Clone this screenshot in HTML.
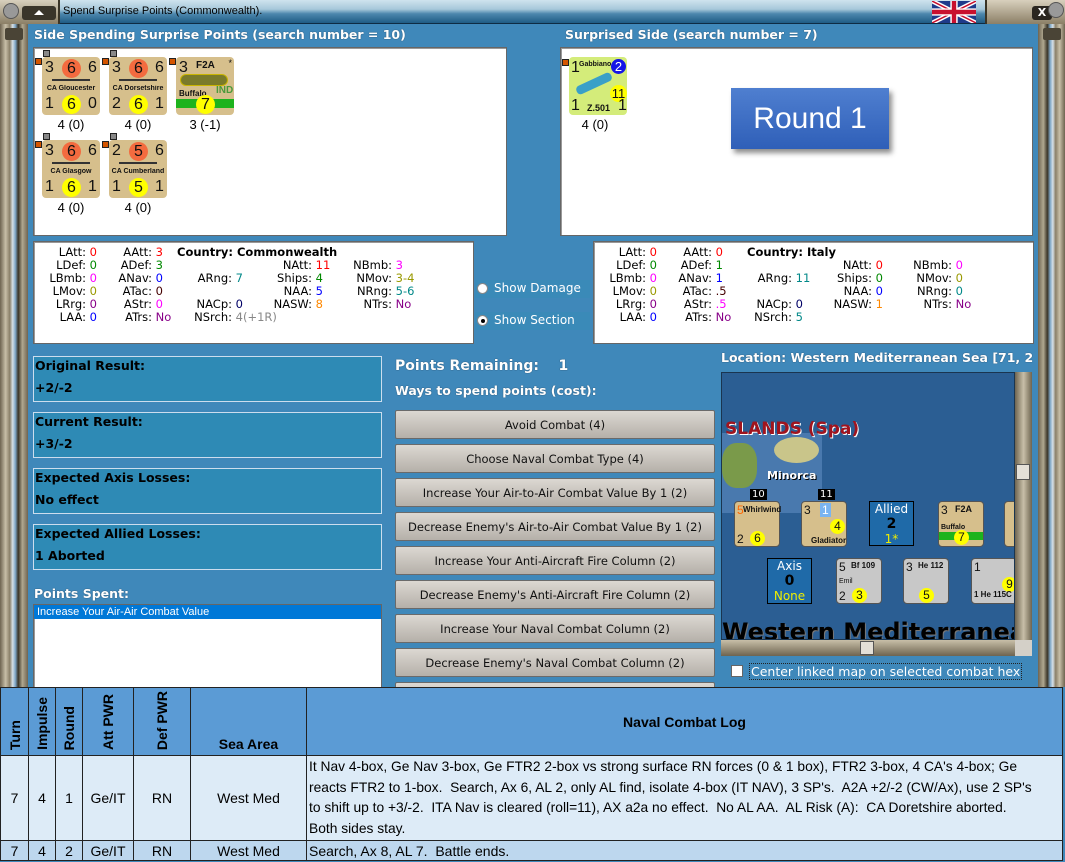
<!DOCTYPE html>
<html><head><meta charset="utf-8">
<style>
*{margin:0;padding:0;box-sizing:border-box}
body{width:1065px;height:862px;overflow:hidden;position:relative;background:#3f88ba;font-family:"DejaVu Sans",Verdana,sans-serif;font-size:11px}
.a{position:absolute}
.hdr{color:#fff;font-weight:bold;font-size:12.5px;text-shadow:0 0 1px #234}
.wb{background:#fff;border:1px solid #666;box-shadow:inset 1px 1px 0 #999}
.ctr{position:absolute;width:58px;height:58px;background:#d6bf8c;border-radius:4px;font-family:"Liberation Sans",Arial,sans-serif;color:#111}
.ctr .n{position:absolute;font-size:16px}
.ctr .c{position:absolute;width:19px;height:19px;border-radius:50%;text-align:center;font-size:16px;line-height:19px;left:20px}
.ctr .nm{position:absolute;width:100%;text-align:center;font-size:7px;font-weight:bold;top:28px;white-space:nowrap;overflow:hidden}
.ship{position:absolute;left:10px;top:20px;width:38px;height:4px;border-bottom:2px solid #333}
.dot{position:absolute;width:7px;height:7px;background:#d45500;border:1px solid #222}
.gdot{position:absolute;width:7px;height:7px;background:#888;border:1px solid #222}
.cap{position:absolute;font-family:"Liberation Sans",Arial,sans-serif;font-size:13px;color:#000;width:60px;text-align:center}
.st{position:absolute;line-height:13px;font-size:11.5px}
.st div{height:13px;white-space:nowrap}
.l{display:inline-block;text-align:right}
.res{position:absolute;left:33px;width:349px;height:46px;background:#2e8ab5;border:1px solid #cde;color:#000;font-weight:bold;font-size:12.5px;padding:1px 1px}
.res div{height:22px}
.btn{position:absolute;left:395px;width:320px;height:29px;background:linear-gradient(#dcd8d2,#b5b0a9);border:1px solid #6a6a6a;border-radius:2px;text-align:center;line-height:28px;font-size:11.5px;color:#111}
.mc{position:absolute;width:46px;height:46px;border-radius:4px;font-family:"Liberation Sans",Arial,sans-serif;font-size:12px;color:#111;border:1px solid #555}
.mc .y{position:absolute;width:15px;height:15px;border-radius:50%;background:#ff0;text-align:center;line-height:15px;font-size:12px}
table{border-collapse:collapse;font-family:"Liberation Sans",Calibri,sans-serif;table-layout:fixed}
td,th{border:1.5px solid #222;text-align:center}
th{background:#5b9bd5;color:#000;font-weight:bold;font-size:14px;vertical-align:bottom}
.rot{writing-mode:vertical-rl;transform:rotate(180deg);display:inline-block;padding:2px 0}
</style></head><body>
<div class="a" style="left:0;top:0;width:1065px;height:24px;background:linear-gradient(#cfe3ee,#a7c8da 40%,#4d87ad 60%,#1f5c85);border-bottom:1px solid #0e2c44"></div>
<div class="a" style="left:0;top:0;width:60px;height:24px;background:linear-gradient(#d8d0bd,#8b7f66);border-right:2px solid #3a3426"></div>
<div class="a" style="left:3px;top:3px;width:16px;height:16px;border-radius:50%;background:#999;border:1px solid #555"></div>
<div class="a" style="left:22px;top:6px;width:34px;height:14px;background:#3a352a;border-radius:3px"><div class="a" style="left:12px;top:4px;width:0;height:0;border-left:5px solid transparent;border-right:5px solid transparent;border-bottom:5px solid #fff"></div></div>
<div class="a" style="left:63px;top:5px;font-family:'Liberation Sans',Arial;font-size:11px;color:#000">Spend Surprise Points (Commonwealth).</div>
<svg class="a" style="left:932px;top:1px" width="44" height="22" viewBox="0 0 60 30"><rect width="60" height="30" fill="#1e3a8a"/><path d="M0 0L60 30M60 0L0 30" stroke="#fff" stroke-width="6"/><path d="M0 0L60 30M60 0L0 30" stroke="#c8102e" stroke-width="2"/><path d="M30 0V30M0 15H60" stroke="#fff" stroke-width="10"/><path d="M30 0V30M0 15H60" stroke="#c8102e" stroke-width="6"/></svg>
<div class="a" style="left:985px;top:0;width:80px;height:24px;background:linear-gradient(#d8d0bd,#8b7f66);border-left:2px solid #3a3426"></div>
<div class="a" style="left:1032px;top:6px;width:20px;height:14px;background:#2a2620;border-radius:3px;color:#fff;font-size:11px;text-align:center;line-height:14px;font-weight:bold">X</div>
<div class="a" style="left:1048px;top:2px;width:16px;height:16px;border-radius:50%;background:#999;border:1px solid #555"></div>
<div class="a" style="left:0;top:24px;width:28px;height:663px;background:linear-gradient(90deg,#6e6450,#c8bfa8 20%,#8a7f68 35%,#d6e0e6 45%,#7ea6c6 55%,#3a3426 65%,#b0a890 80%,#6e6450)"></div>
<div class="a" style="left:5px;top:28px;width:18px;height:12px;background:#4a4436;border-radius:2px"></div>
<div class="a" style="left:1038px;top:24px;width:27px;height:663px;background:linear-gradient(90deg,#6e6450,#b0a890 20%,#3a3426 35%,#7ea6c6 45%,#d6e0e6 55%,#8a7f68 65%,#c8bfa8 80%,#6e6450)"></div>
<div class="a" style="left:1043px;top:28px;width:18px;height:12px;background:#4a4436;border-radius:2px"></div>

<div class="a hdr" style="left:34px;top:27px">Side Spending Surprise Points (search number = 10)</div>
<div class="a hdr" style="left:565px;top:27px">Surprised Side (search number = 7)</div>

<div class="a wb" style="left:33px;top:47px;width:474px;height:189px"></div>
<div class="a wb" style="left:560px;top:47px;width:473px;height:189px"></div>

<div class="gdot" style="left:43px;top:50px"></div><div class="dot" style="left:35px;top:58px"></div>
<div class="ctr" style="left:42px;top:57px"><span class="n" style="left:3px;top:2px">3</span><span class="c" style="background:#f36b3f;top:2px">6</span><span class="n" style="left:46px;top:2px">6</span><div class="ship"></div><div class="nm">CA Gloucester</div><span class="n" style="left:3px;top:38px">1</span><span class="c" style="background:#ff0;top:38px">6</span><span class="n" style="left:46px;top:38px">0</span></div>
<div class="cap" style="left:41px;top:117px">4 (0)</div>

<div class="gdot" style="left:110px;top:50px"></div><div class="dot" style="left:102px;top:58px"></div>
<div class="ctr" style="left:109px;top:57px"><span class="n" style="left:3px;top:2px">3</span><span class="c" style="background:#f36b3f;top:2px">6</span><span class="n" style="left:46px;top:2px">6</span><div class="ship"></div><div class="nm">CA Dorsetshire</div><span class="n" style="left:3px;top:38px">2</span><span class="c" style="background:#ff0;top:38px">6</span><span class="n" style="left:46px;top:38px">1</span></div>
<div class="cap" style="left:108px;top:117px">4 (0)</div>

<div class="dot" style="left:169px;top:58px"></div>
<div class="ctr" style="left:176px;top:57px"><span class="n" style="left:3px;top:2px">3</span><span class="a" style="left:20px;top:3px;font-size:10px;font-weight:bold">F2A</span><span class="a" style="right:2px;top:1px;font-size:9px">*</span><div class="a" style="left:4px;top:17px;width:48px;height:12px;background:#7a7a2a;border-radius:6px;border:1px solid #c9b400"></div><span class="a" style="left:3px;top:32px;font-size:8px;font-weight:bold">Buffalo</span><span class="a" style="left:40px;top:28px;font-size:10px;font-weight:bold;color:#4a9a3a">IND</span><div class="a" style="left:0;top:42px;width:58px;height:9px;background:#1db31d"></div><span class="c" style="background:#ff0;top:38px">7</span></div>
<div class="cap" style="left:175px;top:117px">3 (-1)</div>

<div class="gdot" style="left:43px;top:133px"></div><div class="dot" style="left:35px;top:141px"></div>
<div class="ctr" style="left:42px;top:140px"><span class="n" style="left:3px;top:2px">3</span><span class="c" style="background:#f36b3f;top:2px">6</span><span class="n" style="left:46px;top:2px">6</span><div class="ship"></div><div class="nm">CA Glasgow</div><span class="n" style="left:3px;top:38px">1</span><span class="c" style="background:#ff0;top:38px">6</span><span class="n" style="left:46px;top:38px">1</span></div>
<div class="cap" style="left:41px;top:200px">4 (0)</div>

<div class="gdot" style="left:110px;top:133px"></div><div class="dot" style="left:102px;top:141px"></div>
<div class="ctr" style="left:109px;top:140px"><span class="n" style="left:3px;top:2px">2</span><span class="c" style="background:#f36b3f;top:2px">5</span><span class="n" style="left:46px;top:2px">6</span><div class="ship"></div><div class="nm">CA Cumberland</div><span class="n" style="left:3px;top:38px">1</span><span class="c" style="background:#ff0;top:38px">5</span><span class="n" style="left:46px;top:38px">1</span></div>
<div class="cap" style="left:108px;top:200px">4 (0)</div>

<div class="dot" style="left:562px;top:59px"></div>
<div class="ctr" style="left:569px;top:57px;background:#d4ec7a"><span class="n" style="left:2px;top:2px">1</span><span class="a" style="left:10px;top:4px;font-size:7px;font-weight:bold">Gabbiano</span><span class="c" style="left:42px;top:2px;width:15px;height:15px;line-height:15px;font-size:13px;background:#1515e6;color:#fff">2</span><div class="a" style="left:6px;top:22px;width:38px;height:9px;background:#3aa0c8;transform:rotate(-25deg);border-radius:4px"></div><span class="c" style="left:41px;top:28px;width:17px;height:17px;line-height:17px;font-size:13px;background:#ff0">11</span><span class="n" style="left:2px;top:40px">1</span><span class="a" style="left:18px;top:46px;font-size:9px;font-weight:bold">Z.501</span><span class="n" style="left:49px;top:40px">1</span></div>
<div class="cap" style="left:565px;top:117px">4 (0)</div>

<div class="a" style="left:731px;top:88px;width:158px;height:61px;background:linear-gradient(#4f7fd0,#2f5fb8);box-shadow:3px 4px 5px rgba(0,0,0,.45);color:#fff;font-family:'Liberation Sans',Calibri,sans-serif;font-size:30px;text-align:center;line-height:61px">Round 1</div>

<div class="a wb" style="left:33px;top:241px;width:441px;height:103px"></div>
<div class="a wb" style="left:593px;top:241px;width:441px;height:103px"></div>

<div class="st" style="left:36px;top:246px"><div><span class="l" style="width:50px">LAtt:</span> <span style="color:#f00">0</span></div><div><span class="l" style="width:50px">LDef:</span> <span style="color:#080">0</span></div><div><span class="l" style="width:50px">LBmb:</span> <span style="color:#f0f">0</span></div><div><span class="l" style="width:50px">LMov:</span> <span style="color:#990">0</span></div><div><span class="l" style="width:50px">LRrg:</span> <span style="color:#808">0</span></div><div><span class="l" style="width:50px">LAA:</span> <span style="color:#00f">0</span></div></div>
<div class="st" style="left:100px;top:246px"><div><span class="l" style="width:52px">AAtt:</span> <span style="color:#f00">3</span></div><div><span class="l" style="width:52px">ADef:</span> <span style="color:#080">3</span></div><div><span class="l" style="width:52px">ANav:</span> <span style="color:#00f">0</span></div><div><span class="l" style="width:52px">ATac:</span> <span style="color:#400">0</span></div><div><span class="l" style="width:52px">AStr:</span> <span style="color:#f0f">0</span></div><div><span class="l" style="width:52px">ATrs:</span> <span style="color:#808">No</span></div></div>
<div class="st" style="left:177px;top:246px"><div><b>Country: Commonwealth</b></div></div>
<div class="st" style="left:170px;top:246px"><div></div><div></div><div><span class="l" style="width:62px">ARng:</span> <span style="color:#088">7</span></div><div></div><div><span class="l" style="width:62px">NACp:</span> <span style="color:#006">0</span></div><div><span class="l" style="width:62px">NSrch:</span> <span style="color:#888">4(+1R)</span></div></div>
<div class="st" style="left:250px;top:246px"><div></div><div><span class="l" style="width:62px">NAtt:</span> <span style="color:#f00">11</span></div><div><span class="l" style="width:62px">Ships:</span> <span style="color:#080">4</span></div><div><span class="l" style="width:62px">NAA:</span> <span style="color:#00f">5</span></div><div><span class="l" style="width:62px">NASW:</span> <span style="color:#f80">8</span></div></div>
<div class="st" style="left:330px;top:246px"><div></div><div><span class="l" style="width:62px">NBmb:</span> <span style="color:#f0f">3</span></div><div><span class="l" style="width:62px">NMov:</span> <span style="color:#990">3-4</span></div><div><span class="l" style="width:62px">NRng:</span> <span style="color:#088">5-6</span></div><div><span class="l" style="width:62px">NTrs:</span> <span style="color:#808">No</span></div></div>

<div class="st" style="left:596px;top:246px"><div><span class="l" style="width:50px">LAtt:</span> <span style="color:#f00">0</span></div><div><span class="l" style="width:50px">LDef:</span> <span style="color:#080">0</span></div><div><span class="l" style="width:50px">LBmb:</span> <span style="color:#f0f">0</span></div><div><span class="l" style="width:50px">LMov:</span> <span style="color:#990">0</span></div><div><span class="l" style="width:50px">LRrg:</span> <span style="color:#808">0</span></div><div><span class="l" style="width:50px">LAA:</span> <span style="color:#00f">0</span></div></div>
<div class="st" style="left:660px;top:246px"><div><span class="l" style="width:52px">AAtt:</span> <span style="color:#f00">0</span></div><div><span class="l" style="width:52px">ADef:</span> <span style="color:#080">1</span></div><div><span class="l" style="width:52px">ANav:</span> <span style="color:#00f">1</span></div><div><span class="l" style="width:52px">ATac:</span> <span style="color:#400">.5</span></div><div><span class="l" style="width:52px">AStr:</span> <span style="color:#f0f">.5</span></div><div><span class="l" style="width:52px">ATrs:</span> <span style="color:#808">No</span></div></div>
<div class="st" style="left:747px;top:246px"><div><b>Country: Italy</b></div></div>
<div class="st" style="left:730px;top:246px"><div></div><div></div><div><span class="l" style="width:62px">ARng:</span> <span style="color:#088">11</span></div><div></div><div><span class="l" style="width:62px">NACp:</span> <span style="color:#006">0</span></div><div><span class="l" style="width:62px">NSrch:</span> <span style="color:#088">5</span></div></div>
<div class="st" style="left:810px;top:246px"><div></div><div><span class="l" style="width:62px">NAtt:</span> <span style="color:#f00">0</span></div><div><span class="l" style="width:62px">Ships:</span> <span style="color:#080">0</span></div><div><span class="l" style="width:62px">NAA:</span> <span style="color:#00f">0</span></div><div><span class="l" style="width:62px">NASW:</span> <span style="color:#f80">1</span></div></div>
<div class="st" style="left:890px;top:246px"><div></div><div><span class="l" style="width:62px">NBmb:</span> <span style="color:#f0f">0</span></div><div><span class="l" style="width:62px">NMov:</span> <span style="color:#990">0</span></div><div><span class="l" style="width:62px">NRng:</span> <span style="color:#088">0</span></div><div><span class="l" style="width:62px">NTrs:</span> <span style="color:#808">No</span></div></div>

<div class="a" style="left:475px;top:280px;width:115px;height:18px;background:#3a8ab8"></div>
<div class="a" style="left:477px;top:283px;width:11px;height:11px;border-radius:50%;background:#fff;border:1px solid #888"></div>
<div class="a" style="left:494px;top:281px;color:#fff;font-size:12px">Show Damage</div>
<div class="a" style="left:475px;top:312px;width:115px;height:18px;background:#3a8ab8"></div>
<div class="a" style="left:477px;top:315px;width:11px;height:11px;border-radius:50%;background:#fff;border:1px solid #888"><div class="a" style="left:3px;top:3px;width:4px;height:4px;border-radius:50%;background:#000"></div></div>
<div class="a" style="left:494px;top:313px;color:#fff;font-size:12px">Show Section</div>

<div class="res" style="top:356px"><div>Original Result:</div><div>+2/-2</div></div>
<div class="res" style="top:412px"><div>Current Result:</div><div>+3/-2</div></div>
<div class="res" style="top:468px"><div>Expected Axis Losses:</div><div>No effect</div></div>
<div class="res" style="top:524px"><div>Expected Allied Losses:</div><div>1 Aborted</div></div>
<div class="a hdr" style="left:34px;top:586px">Points Spent:</div>
<div class="a wb" style="left:33px;top:604px;width:349px;height:90px"><div style="background:#0078d7;color:#fff;font-family:'Liberation Sans',Arial;font-size:11px;height:14px;line-height:14px;padding-left:3px">Increase Your Air-Air Combat Value</div></div>

<div class="a hdr" style="left:395px;top:358px;font-size:14px">Points Remaining:&nbsp;&nbsp;&nbsp; 1</div>
<div class="a hdr" style="left:395px;top:383px">Ways to spend points (cost):</div>
<div class="btn" style="top:410px">Avoid Combat (4)</div>
<div class="btn" style="top:444px">Choose Naval Combat Type (4)</div>
<div class="btn" style="top:478px">Increase Your Air-to-Air Combat Value By 1 (2)</div>
<div class="btn" style="top:512px">Decrease Enemy's Air-to-Air Combat Value By 1 (2)</div>
<div class="btn" style="top:546px">Increase Your Anti-Aircraft Fire Column (2)</div>
<div class="btn" style="top:580px">Decrease Enemy's Anti-Aircraft Fire Column (2)</div>
<div class="btn" style="top:614px">Increase Your Naval Combat Column (2)</div>
<div class="btn" style="top:648px">Decrease Enemy's Naval Combat Column (2)</div>
<div class="btn" style="top:682px"></div>

<div class="a hdr" style="left:721px;top:350px;width:320px;overflow:hidden;white-space:nowrap">Location: Western Mediterranean Sea [71, 2</div>
<div class="a" style="left:721px;top:372px;width:294px;height:268px;background:#2b5e93;border:1px solid #1a3550;overflow:hidden">
 <div class="a" style="left:0;top:60px;width:100px;height:80px;background:#5d8cc0;opacity:.6"></div>
 <div class="a" style="left:0;top:70px;width:35px;height:45px;background:#7a9a4a;border-radius:40%"></div>
 <div class="a" style="left:52px;top:64px;width:45px;height:26px;background:#c9c58a;border-radius:50%"></div>
 <div class="a" style="left:3px;top:46px;color:#a0141e;font-size:17px;font-weight:bold;font-family:'DejaVu Sans';text-shadow:1px 1px 0 #fff">SLANDS (Spa)</div>
 <div class="a" style="left:45px;top:96px;color:#fff;font-size:11px;font-weight:bold;text-shadow:1px 1px 0 #000">Minorca</div>
 <div class="a" style="left:0;top:245px;color:#000;font-size:24px;font-weight:bold;font-family:'DejaVu Sans';white-space:nowrap;text-shadow:1px 1px 0 #777">Western Mediterranean</div>
 <div class="a" style="left:28px;top:116px;background:#000;color:#fff;font-size:10px;padding:0 2px">10</div>
 <div class="a" style="left:96px;top:116px;background:#000;color:#fff;font-size:10px;padding:0 2px">11</div>
 <div class="mc" style="left:12px;top:128px;background:#d6bf8c"><span class="a" style="left:2px;top:1px;color:#f60">5</span><span class="a" style="left:8px;top:3px;font-size:8px;font-weight:bold">Whirlwind</span><span class="a" style="left:2px;top:30px">2</span><span class="y" style="left:15px;top:29px">6</span></div>
 <div class="mc" style="left:79px;top:128px;background:#d6bf8c"><span class="a" style="left:2px;top:1px">3</span><span class="a" style="left:18px;top:1px;background:#7ab4f0;color:#fff;padding:0 2px">1</span><span class="y" style="left:28px;top:17px">4</span><span class="a" style="left:9px;top:34px;font-size:8px;font-weight:bold">Gladiator</span></div>
 <div class="a" style="left:147px;top:128px;width:45px;height:45px;background:#1f6aa8;border:1px solid #000;color:#fff;text-align:center;font-size:12px;line-height:13px;padding-top:1px">Allied<br><b style="color:#000;font-size:14px;line-height:17px">2</b><br><span style="color:#ee0">1*</span></div>
 <div class="mc" style="left:216px;top:128px;background:#d6bf8c"><span class="a" style="left:2px;top:1px">3</span><span class="a" style="left:16px;top:2px;font-size:9px;font-weight:bold">F2A</span><span class="a" style="left:2px;top:22px;font-size:7px;font-weight:bold">Buffalo</span><div class="a" style="left:0;top:30px;width:44px;height:8px;background:#1db31d"></div><span class="y" style="left:15px;top:28px">7</span></div>
 <div class="mc" style="left:282px;top:128px;background:#d6bf8c"></div>
 <div class="a" style="left:45px;top:185px;width:45px;height:46px;background:#1f6aa8;border:1px solid #000;color:#fff;text-align:center;font-size:12px;line-height:13px;padding-top:1px">Axis<br><b style="color:#000;font-size:14px;line-height:17px">0</b><br><span style="color:#ee0">None</span></div>
 <div class="mc" style="left:114px;top:185px;background:#c8c8c8"><span class="a" style="left:2px;top:1px">5</span><span class="a" style="left:14px;top:2px;font-size:8px;font-weight:bold">Bf 109</span><span class="a" style="left:2px;top:19px;font-size:7px">Emil</span><span class="a" style="left:2px;top:30px">2</span><span class="y" style="left:15px;top:29px">3</span></div>
 <div class="mc" style="left:181px;top:185px;background:#c8c8c8"><span class="a" style="left:2px;top:1px">3</span><span class="a" style="left:14px;top:2px;font-size:8px;font-weight:bold">He 112</span><span class="y" style="left:15px;top:29px">5</span></div>
 <div class="mc" style="left:249px;top:185px;background:#c8c8c8"><span class="a" style="left:2px;top:1px">1</span><span class="y" style="left:30px;top:18px">9</span><span class="a" style="left:2px;top:31px;font-size:8px;font-weight:bold">1 He 115C</span></div>
</div>
<div class="a" style="left:1015px;top:372px;width:17px;height:268px;background:linear-gradient(90deg,#6e6450,#c8bfa8,#6e6450)"></div>
<div class="a" style="left:1016px;top:464px;width:14px;height:16px;background:#e4e0d8;border:1px solid #555"></div>
<div class="a" style="left:721px;top:640px;width:294px;height:16px;background:linear-gradient(#c8bfa8,#6e6450)"></div>
<div class="a" style="left:860px;top:641px;width:14px;height:14px;background:#e4e0d8;border:1px solid #555"></div>
<div class="a" style="left:1015px;top:640px;width:17px;height:16px;background:#d4d0c8"></div>
<div class="a" style="left:731px;top:665px;width:12px;height:12px;background:#fff;border:1px solid #666"></div>
<div class="a" style="left:749px;top:663px;color:#fff;font-size:12.5px;border:1px dotted #222;padding:0 1px;white-space:nowrap">Center linked map on selected combat hex</div>

<table class="a" style="left:0;top:687px;width:1063px">
<colgroup><col style="width:28px"><col style="width:27px"><col style="width:27px"><col style="width:51px"><col style="width:57px"><col style="width:116px"><col></colgroup>
<tr style="height:68px"><th><span class="rot">Turn</span></th><th><span class="rot">Impulse</span></th><th><span class="rot">Round</span></th><th><span class="rot">Att PWR</span></th><th><span class="rot">Def PWR</span></th><th style="padding-bottom:3px">Sea Area</th><th style="vertical-align:middle">Naval Combat Log</th></tr>
<tr style="height:85px;background:#ddebf7;font-size:14px"><td>7</td><td>4</td><td>1</td><td>Ge/IT</td><td>RN</td><td>West Med</td><td style="text-align:left;padding:0 2px;line-height:20.5px;font-size:13.8px;white-space:nowrap;overflow:hidden">It Nav 4-box, Ge Nav 3-box, Ge FTR2 2-box vs strong surface RN forces (0 &amp; 1 box), FTR2 3-box, 4 CA's 4-box; Ge<br>reacts FTR2 to 1-box.&nbsp; Search, Ax 6, AL 2, only AL find, isolate 4-box (IT NAV), 3 SP's.&nbsp; A2A +2/-2 (CW/Ax), use 2 SP's<br>to shift up to +3/-2.&nbsp; ITA Nav is cleared (roll=11), AX a2a no effect.&nbsp; No AL AA.&nbsp; AL Risk (A):&nbsp; CA Doretshire aborted.<br>Both sides stay.</td></tr>
<tr style="height:20px;background:#bdd7ee;font-size:14px"><td>7</td><td>4</td><td>2</td><td>Ge/IT</td><td>RN</td><td>West Med</td><td style="text-align:left;padding:0 2px">Search, Ax 8, AL 7.&nbsp; Battle ends.</td></tr>
</table>
</body></html>
